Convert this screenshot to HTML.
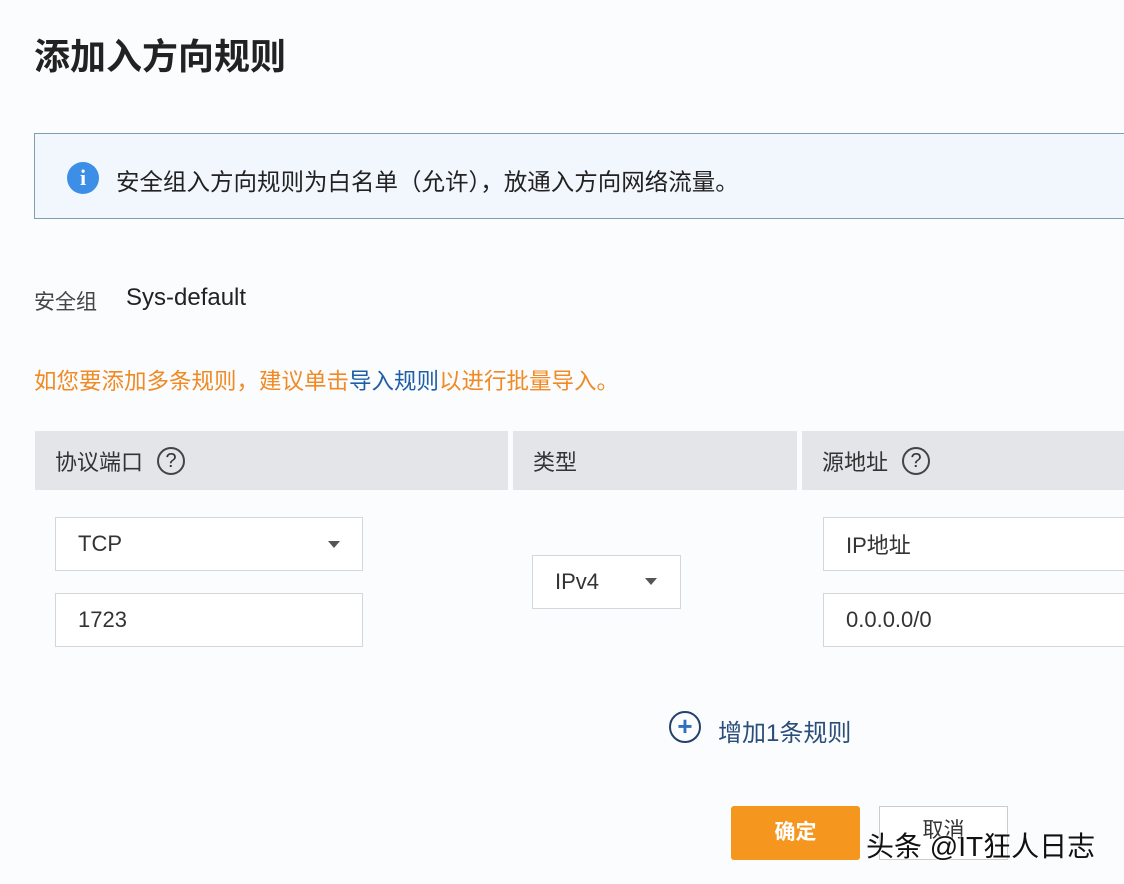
<!DOCTYPE html>
<html><head><meta charset="utf-8"><style>
body{margin:0;width:1124px;height:884px;background:#fbfcfe;font-family:"Liberation Sans","Noto Sans CJK SC",sans-serif;color:#333;position:relative;overflow:hidden}
.a{position:absolute;white-space:nowrap}
.box{position:absolute;background:#fff;border:1px solid #d3d6db;box-sizing:border-box;font-size:22px;color:#333;padding-left:22px;display:flex;align-items:center}
.th{position:absolute;top:431px;height:59px;background:#e3e5e9;font-size:22px;color:#333;display:flex;align-items:center;padding-left:20px;box-sizing:border-box}
.q{display:inline-block;width:28px;height:28px;border:2px solid #444;border-radius:50%;text-align:center;font-size:20px;margin-left:14px;box-sizing:border-box;line-height:24px}
.tri{position:absolute;width:0;height:0;border-left:6px solid transparent;border-right:6px solid transparent;border-top:7px solid #555}
</style></head><body>
<div class="a" style="left:34px;top:28px;font-size:36px;font-weight:bold;color:#222">添加入方向规则</div>
<div class="a" style="left:34px;top:133px;width:1100px;height:86px;background:#f2f7fd;border:1px solid #7f9db3;box-sizing:border-box"></div>
<div class="a" style="left:67px;top:162px;width:32px;height:32px;border-radius:50%;background:#3d8ee6;color:#fff;text-align:center;font-weight:bold;font-size:22px;line-height:32px;font-family:'Liberation Serif',serif">i</div>
<div class="a" style="left:116px;top:163px;font-size:23.5px;color:#222">安全组入方向规则为白名单（允许），放通入方向网络流量。</div>
<div class="a" style="left:34px;top:286px;font-size:21px;color:#444">安全组</div>
<div class="a" style="left:126px;top:284px;font-size:24px;color:#222">Sys-default</div>
<div class="a" style="left:34px;top:364px;font-size:22.5px;color:#f08a24">如您要添加多条规则，建议单击<span style="color:#1f5fa8">导入规则</span>以进行批量导入。</div>
<div class="th" style="left:35px;width:473px">协议端口<span class="q">?</span></div>
<div class="th" style="left:513px;width:284px">类型</div>
<div class="th" style="left:802px;width:322px">源地址<span class="q">?</span></div>
<div class="box" style="left:55px;top:517px;width:308px;height:54px">TCP</div>
<div class="tri" style="left:328px;top:541px"></div>
<div class="box" style="left:55px;top:593px;width:308px;height:54px">1723</div>
<div class="box" style="left:532px;top:555px;width:149px;height:54px">IPv4</div>
<div class="tri" style="left:645px;top:578px"></div>
<div class="box" style="left:823px;top:517px;width:310px;height:54px">IP地址</div>
<div class="box" style="left:823px;top:593px;width:310px;height:54px">0.0.0.0/0</div>
<div class="a" style="left:669px;top:711px;width:32px;height:32px;border:2px solid #23416b;border-radius:50%;box-sizing:border-box;text-align:center;line-height:26px;font-size:26px;color:#2e6fc1;font-weight:bold">+</div>
<div class="a" style="left:718px;top:713px;font-size:24px;color:#2a4d7a">增加1条规则</div>
<div class="a" style="left:731px;top:806px;width:129px;height:54px;background:#f5971f;border-radius:3px;color:#fff;font-size:21px;font-weight:bold;text-align:center;line-height:54px">确定</div>
<div class="a" style="left:879px;top:806px;width:129px;height:54px;background:#fff;border:1px solid #ccc;box-sizing:border-box;font-size:21px;color:#333;text-align:center;line-height:48px">取消</div>
<div class="a" style="left:866px;top:825px;font-size:28px;color:#111;text-shadow:0 0 2px #fff,0 0 2px #fff">头条 @IT狂人日志</div>
</body></html>
